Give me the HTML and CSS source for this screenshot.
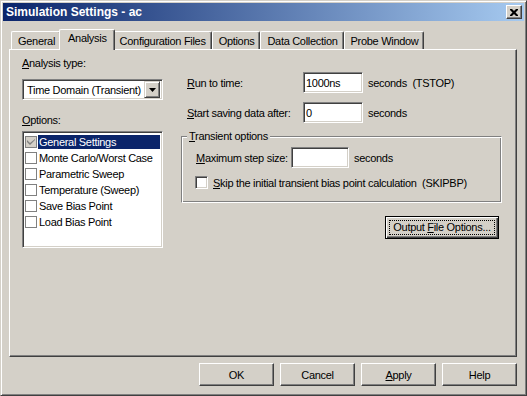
FILE: index.html
```html
<!DOCTYPE html>
<html lang="en">
<head>
    <meta charset="UTF-8">
    <title>Simulation Settings - ac</title>
    <link rel="stylesheet" href="styles.css">
</head>
<body>
<div class="window">
    <!-- Title bar -->
    <div class="titlebar">
        <span class="title">Simulation Settings - ac</span>
        <button class="close" type="button">
            <svg width="8" height="7" viewBox="0 0 8 7"><path d="M0 0h2l2 2 2-2h2v1l-2.5 2.5L8 6v1H6L4 5 2 7H0V6l2.5-2.5L0 1z" fill="#000"/></svg>
        </button>
    </div>

    <!-- Tabs -->
    <div class="tabs">
        <div class="tab">General</div>
        <div class="tab active">Analysis</div>
        <div class="tab">Configuration Files</div>
        <div class="tab">Options</div>
        <div class="tab">Data Collection</div>
        <div class="tab">Probe Window</div>
    </div>

    <div class="panel">
        <div class="left-col">
            <div class="label"><u>A</u>nalysis type:</div>
            <div class="combo">
                <span class="combo-text">Time Domain (Transient)</span>
                <span class="combo-btn">
                    <svg width="7" height="4" viewBox="0 0 7 4"><path d="M0 0h7L3.5 4z" fill="#000"/></svg>
                </span>
            </div>
            <div class="label options-label"><u>O</u>ptions:</div>
            <div class="listbox">
                <div class="item selected"><span class="box grey"><svg width="8" height="7" viewBox="0 0 8 7"><path d="M0 3l3 3 5-5V0L3 4 0 1z" fill="#808080"/></svg></span><span class="item-text">General Settings</span></div>
                <div class="item"><span class="box"></span><span class="item-text">Monte Carlo/Worst Case</span></div>
                <div class="item"><span class="box"></span><span class="item-text">Parametric Sweep</span></div>
                <div class="item"><span class="box"></span><span class="item-text">Temperature (Sweep)</span></div>
                <div class="item"><span class="box"></span><span class="item-text">Save Bias Point</span></div>
                <div class="item"><span class="box"></span><span class="item-text">Load Bias Point</span></div>
            </div>
        </div>

        <div class="right-col">
            <div class="row">
                <span class="field-label"><u>R</u>un to time:</span>
                <input class="textbox" type="text" value="1000ns">
                <span class="unit">seconds&nbsp; (TSTOP)</span>
            </div>
            <div class="row second">
                <span class="field-label"><u>S</u>tart saving data after:</span>
                <input class="textbox" type="text" value="0">
                <span class="unit">seconds</span>
            </div>

            <div class="group">
                <span class="group-title"><u>T</u>ransient options</span>
                <div class="row">
                    <span class="field-label short"><u>M</u>aximum step size:</span>
                    <input class="textbox narrow" type="text" value="">
                    <span class="unit">seconds</span>
                </div>
                <div class="check-row">
                    <span class="checkbox"></span>
                    <span><u>S</u>kip the initial transient bias point calculation&nbsp; (SKIPBP)</span>
                </div>
            </div>

            <button class="btn default" type="button"><span class="focus">Output <u>F</u>ile Options...</span></button>
        </div>
    </div>

    <div class="footer">
        <button class="btn" type="button">OK</button>
        <button class="btn" type="button">Cancel</button>
        <button class="btn" type="button"><u>A</u>pply</button>
        <button class="btn" type="button">Help</button>
    </div>
</div>
</body>
</html>
```

FILE: styles.css
```css
body {
    margin: 0;
    font-family: "Liberation Sans", Arial, sans-serif;
    font-size: 11px;
    letter-spacing: -0.3px;
    color: #000;
}

u {
    text-decoration: underline;
    text-underline-offset: 1px;
}

.window {
    width: 527px;
    height: 396px;
    box-sizing: border-box;
    background: #d4d0c8;
    border: 1px solid;
    border-color: #d4d0c8 #404040 #404040 #d4d0c8;
    box-shadow: inset 1px 1px #fff, inset -1px -1px #808080;
    padding: 2px;
    display: flex;
    flex-direction: column;
}

/* Title bar */
.titlebar {
    height: 18px;
    flex-shrink: 0;
    background: linear-gradient(to right, #0a246a, #a6caf0);
    display: flex;
    align-items: center;
    justify-content: space-between;
    padding: 0 2px 0 3px;
    color: #fff;
}

.title {
    font-weight: bold;
    font-size: 12px;
    letter-spacing: 0;
}

.close {
    width: 16px;
    height: 14px;
    padding: 0;
    margin: 0;
    background: #d4d0c8;
    border: 1px solid;
    border-color: #fff #404040 #404040 #fff;
    box-shadow: inset -1px -1px #808080;
    display: flex;
    align-items: center;
    justify-content: center;
}

/* Tabs */
.tabs {
    display: flex;
    align-items: flex-end;
    height: 20px;
    margin: 8px 0 0 8px;
    position: relative;
    z-index: 1;
}

.tab {
    height: 18px;
    box-sizing: border-box;
    padding: 2px 5px 0 6px;
    line-height: 14px;
    border: 1px solid;
    border-bottom: none;
    border-color: #fff #404040 #404040 #fff;
    box-shadow: inset -1px 0 #808080;
    border-radius: 2px 2px 0 0;
    background: #d4d0c8;
    white-space: nowrap;
}

.tab.active {
    height: 21px;
    margin: 0 -2px -1px;
    padding: 1px 7px 0 8px;
    position: relative;
    z-index: 2;
}

/* Tab page */
.panel {
    margin-left: 6px;
    width: 508px;
    height: 308px;
    flex-shrink: 0;
    box-sizing: border-box;
    border: 1px solid;
    border-color: #fff #404040 #404040 #fff;
    box-shadow: inset -1px -1px #808080;
    display: flex;
}

.left-col {
    width: 141px;
    margin-left: 12px;
    padding-top: 7px;
    display: flex;
    flex-direction: column;
}

.label {
    line-height: 13px;
}

.combo {
    margin-top: 9px;
    height: 21px;
    box-sizing: border-box;
    border: 1px solid;
    border-color: #808080 #fff #fff #808080;
    box-shadow: inset 1px 1px #404040, inset -1px -1px #d4d0c8;
    background: #fff;
    display: flex;
    align-items: center;
    padding: 2px;
}

.combo-text {
    flex: 1;
    padding-left: 2px;
    white-space: nowrap;
}

.combo-btn {
    width: 16px;
    height: 17px;
    box-sizing: border-box;
    background: #d4d0c8;
    border: 1px solid;
    border-color: #d4d0c8 #404040 #404040 #d4d0c8;
    box-shadow: inset 1px 1px #fff, inset -1px -1px #808080;
    display: flex;
    align-items: center;
    justify-content: center;
}

.options-label {
    margin-top: 14px;
}

.listbox {
    margin-top: 4px;
    height: 117px;
    box-sizing: border-box;
    border: 1px solid;
    border-color: #808080 #fff #fff #808080;
    box-shadow: inset 1px 1px #404040, inset -1px -1px #d4d0c8;
    background: #fff;
    padding: 2px;
}

.item {
    height: 16px;
    display: flex;
    align-items: center;
    white-space: nowrap;
}

.item-text {
    flex: 1;
    height: 14px;
    line-height: 14px;
    padding-left: 1px;
}

.item.selected .item-text {
    background: #0a246a;
    color: #fff;
}

.box {
    width: 12px;
    height: 12px;
    box-sizing: border-box;
    margin-right: 1px;
    border: 1px solid #808080;
    background: #fff;
    display: flex;
    align-items: center;
    justify-content: center;
}

.box.grey {
    background: #d4d0c8;
}

/* Right side */
.right-col {
    width: 321px;
    margin-left: 18px;
    padding-top: 22px;
    display: flex;
    flex-direction: column;
}

.row {
    display: flex;
    align-items: center;
    padding-left: 6px;
    white-space: nowrap;
}

.row.second {
    margin-top: 9px;
}

.field-label {
    width: 116px;
}

.field-label.short {
    width: 95px;
}

.textbox {
    width: 60px;
    height: 21px;
    box-sizing: border-box;
    margin: 0;
    padding: 0 2px;
    font: inherit;
    letter-spacing: inherit;
    border: 1px solid;
    border-color: #808080 #fff #fff #808080;
    box-shadow: inset 1px 1px #404040, inset -1px -1px #d4d0c8;
    background: #fff;
    outline: none;
}

.textbox.narrow {
    width: 58px;
}

.unit {
    margin-left: 5px;
    white-space: pre;
}

.group {
    margin-top: 13px;
    height: 67px;
    box-sizing: border-box;
    position: relative;
    border: 1px solid;
    border-color: #808080 #fff #fff #808080;
    box-shadow: inset 1px 1px #fff, inset -1px -1px #808080;
    padding-top: 10px;
}

.group .row {
    padding-left: 14px;
}

.group-title {
    position: absolute;
    top: -7px;
    left: 5px;
    padding: 0 2px;
    line-height: 13px;
    background: #d4d0c8;
}

.check-row {
    display: flex;
    align-items: center;
    margin-top: 8px;
    padding-left: 13px;
    white-space: nowrap;
}

.checkbox {
    width: 13px;
    height: 13px;
    box-sizing: border-box;
    margin-right: 5px;
    border: 1px solid;
    border-color: #808080 #fff #fff #808080;
    box-shadow: inset 1px 1px #404040, inset -1px -1px #d4d0c8;
    background: #fff;
}

/* Buttons */
.btn {
    width: 75px;
    height: 23px;
    padding: 0;
    margin: 0;
    font: inherit;
    letter-spacing: inherit;
    color: #000;
    background: #d4d0c8;
    border: 1px solid;
    border-color: #fff #404040 #404040 #fff;
    box-shadow: inset -1px -1px #808080;
}

.btn.default {
    width: 114px;
    margin-top: 13px;
    margin-right: 3px;
    align-self: flex-end;
    border: 1px solid #000;
    box-shadow: inset 1px 1px #fff, inset -1px -1px #404040, inset -2px -2px #808080;
    padding: 3px;
}

.focus {
    display: block;
    height: 15px;
    line-height: 13px;
    border: 1px dotted #000;
    box-sizing: border-box;
}

.footer {
    display: flex;
    justify-content: flex-end;
    gap: 6px;
    padding: 6px 7px 0 0;
}
```
